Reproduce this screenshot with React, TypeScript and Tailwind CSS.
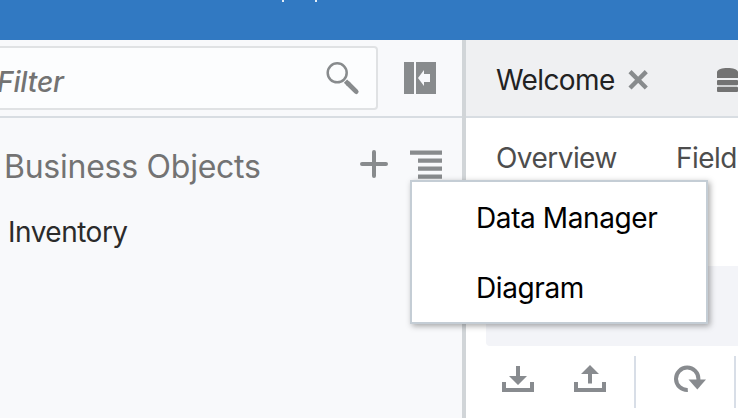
import React from "react";

function Header() {
  return (
    <header className="flex h-10 shrink-0 items-start bg-[#3179c2] pl-[282px]">
      <span className="mr-[31px] h-0.5 w-0.5 bg-[#e3edf7]" />
      <span className="h-0.5 w-0.5 bg-[#e3edf7]" />
    </header>
  );
}

function SearchIcon() {
  return (
    <svg width="34" height="34" viewBox="0 0 34 34" fill="none" stroke="#888b8d">
      <circle cx="11.2" cy="11.8" r="9.5" strokeWidth="2.5" />
      <path d="M19.5 20.1 22.8 23.4" strokeWidth="4.6" />
      <path d="M22.2 22.8 30.2 30.6" strokeWidth="4.8" strokeLinecap="round" />
    </svg>
  );
}

function CollapseIcon() {
  return (
    <svg width="32" height="32" viewBox="0 0 32 32">
      <path fill="#888b8d" d="M0 0H10V32H0zM12 0H32V32H12z" />
      <path fill="#f7f8fb" d="M14 16 20 8V12H26V20H20V24z" />
    </svg>
  );
}

function Sidebar() {
  return (
    <aside className="flex w-[466px] shrink-0 flex-col border-r-4 border-[#d1d5d8] bg-[#f8f9fb]">
      <div className="flex h-[78px] shrink-0 items-start border-b-2 border-[#d8dde2] pt-1.5">
        <div className="flex h-16 w-[378px] items-center justify-between rounded-r-[4px] border-2 border-l-0 border-[#e0e2e4] bg-[#fcfdfe] pr-4">
          <span className="mt-[7px] -ml-[3px] text-[28px] leading-8 font-medium tracking-[-0.1px] text-[#737373] italic">Filter</span>
          <SearchIcon />
        </div>
        <div className="mt-4 ml-[26px]">
          <CollapseIcon />
        </div>
      </div>
      <div className="flex h-[70px] items-start pt-7">
        <h1 className="mt-px ml-1 w-[356px] text-[32px] leading-10 tracking-[-0.25px] whitespace-nowrap text-[#737373]">Business Objects</h1>
        <svg className="mt-1" width="28" height="28" viewBox="0 0 28 28" stroke="#888b8d" strokeWidth="4" strokeLinecap="round">
          <path d="M14 2V26M2 14H26" />
        </svg>
        <svg className="mt-1 ml-[22px]" width="32" height="30" viewBox="0 0 32 30">
          <path fill="#888b8d" d="M0 .5H32V4.7H0zM8 8.5H32V12.7H8zM8 16.5H32V20.7H8zM8 24.5H32V28.7H8z" />
        </svg>
      </div>
      <div className="mt-6 ml-2 text-[28px] leading-10 tracking-[-0.5px] text-[#2b2b2b]">Inventory</div>
    </aside>
  );
}

function TabBar() {
  return (
    <div className="flex h-[78px] shrink-0 items-center border-b-2 border-[#d8dde2] bg-[#eff0f2] pl-[30px]">
      <span className="mt-1 w-[133px] text-[28px] leading-10 tracking-[-0.6px] text-[#222]">Welcome</span>
      <svg className="mt-1" width="20" height="20" viewBox="0 0 20 20" stroke="#888b8d" strokeWidth="4.4">
        <path d="M2 1.6 18.4 18M18.4 1.6 2 18" />
      </svg>
      <svg className="mt-1 ml-[68px] shrink-0" width="22" height="24" viewBox="0 0 22 24" fill="#737373">
        <path d="M1 10V4C1.6 1.2 6 0 11.5 0S21.4 1.2 22 4V10z" />
        <rect x="1" y="12" width="21" height="5.2" rx="1" />
        <rect x="1" y="18.8" width="21" height="5.2" rx="1" />
      </svg>
    </div>
  );
}

function Toolbar() {
  return (
    <div className="mt-2.5 flex h-[52px] items-start">
      <svg className="mt-2 ml-9" width="32" height="30" viewBox="0 0 32 30">
        <path d="M2 18V26H30V18" fill="none" stroke="#888b8f" strokeWidth="4" />
        <path fill="#888b8f" d="M14 2H18V12H25L16 21 7 12H14z" />
      </svg>
      <svg className="mt-2 ml-10" width="32" height="30" viewBox="0 0 32 30">
        <path d="M2 18V26H30V18" fill="none" stroke="#888b8f" strokeWidth="4" />
        <path fill="#888b8f" d="M14 19.5V10H7L16 1 25 10H18V19.5z" />
      </svg>
      <span className="ml-7 h-[52px] w-0.5 bg-[#d8dee7]" />
      <svg className="mt-2 ml-[38px]" width="32" height="30" viewBox="0 0 32 30">
        <path d="M13.8 26A11.2 11.2 0 1 1 24.4 15V17" fill="none" stroke="#888b8f" strokeWidth="4" />
        <path fill="#888b8f" d="M14.5 15.5H32L23.3 25.5z" />
      </svg>
      <span className="ml-7 h-[52px] w-0.5 shrink-0 bg-[#d8dee7]" />
    </div>
  );
}

function Menu() {
  return (
    <div className="absolute top-[180px] left-[410px] h-36 w-[298px] border-2 border-[#c4cdd5] bg-white text-[28px] tracking-[-0.4px] text-black shadow-[2px_2px_6px_rgba(0,0,0,0.35)]">
      <div className="h-[70px] pt-px pl-16 leading-[70px] whitespace-nowrap">Data Manager</div>
      <div className="h-[70px] pt-px pl-16 leading-[70px]">Diagram</div>
    </div>
  );
}

export default function App() {
  return (
    <div className="relative flex h-[418px] w-[738px] flex-col overflow-hidden bg-white font-['Inter',sans-serif]">
      <Header />
      <div className="flex min-h-0 flex-1">
        <Sidebar />
        <main className="flex min-w-0 flex-1 flex-col overflow-hidden">
          <TabBar />
          <nav className="flex h-[148px] items-start pt-5 pl-[30px] text-[28px] leading-10 tracking-[-0.55px] text-[#4d4d4d]">
            <span className="w-[180px] shrink-0">Overview</span>
            <span className="whitespace-nowrap">Field</span>
          </nav>
          <div className="ml-5 h-20 shrink-0 rounded-l-[4px] bg-[#f3f4f8]" />
          <Toolbar />
        </main>
      </div>
      <Menu />
    </div>
  );
}
